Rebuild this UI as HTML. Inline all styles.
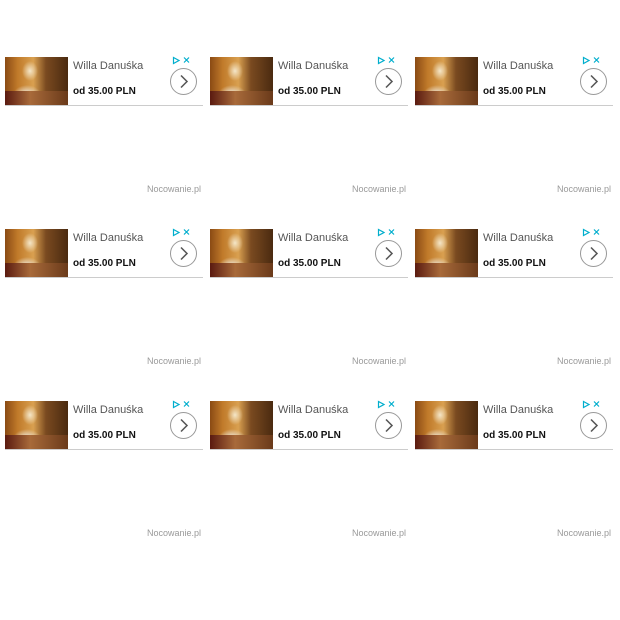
<!DOCTYPE html><html><head><style>
body{margin:0;width:620px;height:620px;background:#fff;font-family:"Liberation Sans",sans-serif;position:relative;overflow:hidden}
.u{position:absolute;width:198px;height:140px}
.img{position:absolute;left:0;top:0;width:63px;height:48px;background:
radial-gradient(ellipse 8px 10px at 25px 14px,#f4e6c8,transparent),
radial-gradient(ellipse 14px 10px at 22px 38px,#e8d8c0 30%,transparent),
linear-gradient(90deg,#8a4a14 0%,#c07a2a 20%,#d9a050 45%,#7a4a20 65%,#4a2a10 100%)}
.img:after{content:"";position:absolute;left:0;bottom:0;width:63px;height:14px;background:linear-gradient(90deg,#5a1a10,#a86a3a 40%,#6a3a1a)}
.t{position:absolute;left:68px;top:3px;font-size:11px;color:#555}
.p{position:absolute;left:68px;top:29px;font-size:10px;font-weight:bold;color:#111}
.ln{position:absolute;left:0;top:48px;width:198px;height:1px;background:#ccc}
.c{position:absolute;left:165px;top:11px;width:25px;height:25px;border:1px solid #999;border-radius:50%}
.ic{position:absolute;left:167px;top:-1px;font-size:9px;color:#00aecd}
.n{position:absolute;right:2px;top:127px;font-size:9px;color:#999}
</style></head><body>
<script>
for(let r=0;r<3;r++)for(let c=0;c<3;c++){document.write(`<div class="u" style="left:${5+c*205}px;top:${57+r*172}px"><div class="img"></div><div class="t">Willa Danuśka</div><div class="p">od 35.00 PLN</div><div class="ln"></div><div class="c"><svg width="25" height="25" viewBox="0 0 25 25"><path d="M10 6.5L16 12.5L10 18.5" fill="none" stroke="#555" stroke-width="1.5"/></svg></div><div class="ic"><svg width="20" height="9"><path d="M1.5 1.5L7 4.5L1.5 7.5Z" fill="none" stroke="#00aecd" stroke-width="1.2"/><path d="M12 1.5L17 6.5M17 1.5L12 6.5" stroke="#00aecd" stroke-width="1.2"/></svg></div><div class="n">Nocowanie.pl</div></div>`)}
</script>
</body></html>
